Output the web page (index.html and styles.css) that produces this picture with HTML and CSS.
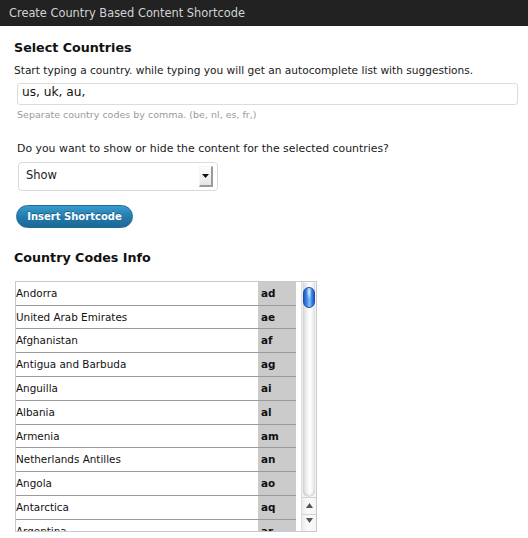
FILE: index.html
```html
<!DOCTYPE html>
<html>
<head>
<meta charset="utf-8">
<title>Create Country Based Content Shortcode</title>
<link rel="stylesheet" href="styles.css">
</head>
<body>
<div class="titlebar">Create Country Based Content Shortcode</div>
<main class="content">
  <h2 class="section-title">Select Countries</h2>
  <p class="desc">Start typing a country. while typing you will get an autocomplete list with suggestions.</p>
  <input class="text-input" type="text" value="us, uk, au,">
  <p class="hint">Separate country codes by comma. (be, nl, es, fr,)</p>
  <p class="question">Do you want to show or hide the content for the selected countries?</p>
  <div class="select">
    <span class="select-value">Show</span>
    <span class="select-arrow"><svg width="7" height="4" viewBox="0 0 7 4"><path d="M0 0H7L3.5 4Z" fill="#111"/></svg></span>
  </div>
  <button class="btn" type="button">Insert Shortcode</button>
  <h2 class="section-title codes-title">Country Codes Info</h2>
  <div class="codes-box">
    <div class="codes-list">
      <table class="codes">
        <tr><td class="name">Andorra</td><td class="code">ad</td></tr>
        <tr><td class="name">United Arab Emirates</td><td class="code">ae</td></tr>
        <tr><td class="name">Afghanistan</td><td class="code">af</td></tr>
        <tr><td class="name">Antigua and Barbuda</td><td class="code">ag</td></tr>
        <tr><td class="name">Anguilla</td><td class="code">ai</td></tr>
        <tr><td class="name">Albania</td><td class="code">al</td></tr>
        <tr><td class="name">Armenia</td><td class="code">am</td></tr>
        <tr><td class="name">Netherlands Antilles</td><td class="code">an</td></tr>
        <tr><td class="name">Angola</td><td class="code">ao</td></tr>
        <tr><td class="name">Antarctica</td><td class="code">aq</td></tr>
        <tr><td class="name">Argentina</td><td class="code">ar</td></tr>
      </table>
    </div>
    <div class="scrollbar">
      <div class="track"><div class="thumb"></div></div>
      <div class="arrow"><svg width="7" height="5" viewBox="0 0 7 5"><path d="M3.5 0L7 5H0Z" fill="#555"/></svg></div>
      <div class="arrow arrow-down"><svg width="7" height="5" viewBox="0 0 7 5"><path d="M0 0H7L3.5 5Z" fill="#555"/></svg></div>
    </div>
  </div>
</main>
</body>
</html>
```
FILE: styles.css
```css
body {
  margin: 0;
  font-family: "DejaVu Sans", "Liberation Sans", sans-serif;
  color: #1a1a1a;
  background: #fff;
}

.titlebar {
  height: 26px;
  line-height: 26px;
  background: #222;
  color: #d2d2d2;
  font-size: 11.4px;
  padding-left: 9px;
}

.content {
  padding-left: 14px;
}

.section-title {
  margin: 14px 0 0;
  font-size: 12.7px;
  line-height: 16px;
  font-weight: bold;
  color: #111;
}

.desc {
  margin: 7px 0 0;
  font-size: 10.6px;
  line-height: 14px;
}

.text-input {
  display: block;
  margin: 6px 0 0 3px;
  width: 501px;
  height: 22px;
  box-sizing: border-box;
  border: 1px solid #dcdcdc;
  border-radius: 3px;
  padding: 0 4px 4px;
  font-family: "DejaVu Sans", sans-serif;
  font-size: 12.2px;
  color: #111;
  background: #fff;
  outline: none;
}

.hint {
  margin: 2.5px 0 0 3px;
  font-size: 9.5px;
  line-height: 13px;
  color: #9a9a9a;
}

.question {
  margin: 21.4px 0 0 3px;
  font-size: 10.9px;
  line-height: 14px;
}

.select {
  margin: 6px 0 0 4px;
  width: 200px;
  height: 29px;
  box-sizing: border-box;
  border: 1px solid #dadada;
  border-radius: 4px;
  display: flex;
  align-items: flex-start;
  justify-content: space-between;
  padding: 0 4px 0 7px;
  background: #fff;
}

.select-value {
  margin-top: 4.7px;
  font-size: 11.5px;
  line-height: 14px;
}

.select-arrow {
  margin-top: 2.7px;
  width: 14px;
  height: 21px;
  box-sizing: border-box;
  border-top: 1px solid #f4f4f4;
  border-left: 1px solid #f4f4f4;
  border-right: 2px solid #9a9a9a;
  border-bottom: 2px solid #9a9a9a;
  background: linear-gradient(#fdfdfd, #e6e6e6);
  display: flex;
  align-items: center;
  justify-content: center;
}

.btn {
  display: block;
  margin: 14px 0 0 2px;
  width: 117px;
  height: 23px;
  padding: 0;
  border: 1px solid #1f6d9b;
  border-radius: 12px;
  background: linear-gradient(#3a9bcd, #2279aa 55%, #1b6896);
  color: #fff;
  font-family: "DejaVu Sans", sans-serif;
  font-size: 10px;
  font-weight: bold;
  text-shadow: 0 -1px 0 rgba(0, 0, 0, 0.3);
}

.codes-title {
  margin-top: 22.4px;
}

.codes-box {
  margin: 14.6px 0 0 1px;
  width: 302px;
  height: 251px;
  box-sizing: border-box;
  border: 1px solid #c9c9c9;
  display: flex;
  overflow: hidden;
}

.codes-list {
  flex: 1;
  overflow: hidden;
}

.codes {
  width: 280px;
  border-collapse: separate;
  border-spacing: 0;
  table-layout: fixed;
}

.codes td {
  padding: 0;
  line-height: 22.78px;
  font-size: 10.4px;
  border-bottom: 1px solid #9b9b9b;
  white-space: nowrap;
}

.codes .name {
  width: 242px;
  color: #111;
}

.codes .code {
  width: 35px;
  padding-left: 3px;
  background: #cbcbcb;
  font-weight: bold;
  color: #111;
}

.scrollbar {
  width: 15px;
  box-sizing: border-box;
  border-left: 1px solid #dedede;
  display: flex;
  flex-direction: column;
  background: linear-gradient(to right, #ececec, #fbfbfb 45%, #f4f4f4);
}

.track {
  flex: 1;
  margin: 1px 1px 0;
  border-radius: 0 0 7px 7px;
  background: linear-gradient(to right, #d9d9d9, #f3f3f3 35%, #fff 60%, #e4e4e4);
  box-shadow: inset 0 -2px 2px rgba(0, 0, 0, 0.12);
  padding-top: 4px;
}

.thumb {
  width: 12px;
  height: 21px;
  box-sizing: border-box;
  border: 1px solid #1d4fa8;
  border-radius: 6px;
  background:
    radial-gradient(ellipse at 50% 22%, rgba(255, 255, 255, 0.75) 0, rgba(255, 255, 255, 0) 35%),
    linear-gradient(to right, #1f58c4, #4f95ea 35%, #7cbdfb 55%, #3e84e0 80%, #1c53bd);
}

.arrow {
  height: 17px;
  display: flex;
  align-items: center;
  justify-content: center;
  border-top: 1px solid #d4d4d4;
  box-sizing: border-box;
}

.arrow-down {
  padding-bottom: 4px;
}
```
